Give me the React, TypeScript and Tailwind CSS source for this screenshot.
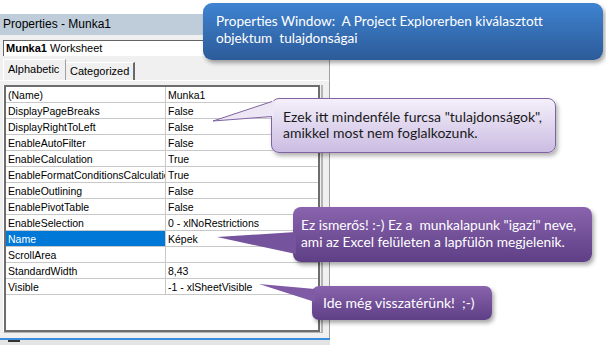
const rows: [string, string][] = [
  ['(Name)', 'Munka1'],
  ['DisplayPageBreaks', 'False'],
  ['DisplayRightToLeft', 'False'],
  ['EnableAutoFilter', 'False'],
  ['EnableCalculation', 'True'],
  ['EnableFormatConditionsCalculation', 'True'],
  ['EnableOutlining', 'False'],
  ['EnablePivotTable', 'False'],
  ['EnableSelection', '0 - xlNoRestrictions'],
  ['Name', 'Képek'],
  ['ScrollArea', ''],
  ['StandardWidth', '8,43'],
  ['Visible', '-1 - xlSheetVisible'],
];

const sans = "font-['Liberation_Sans',Arial,sans-serif]";
const callout = "font-['Lato','Open_Sans',sans-serif]";

export default function App() {
  return (
    <div className={`relative w-[606px] h-[345px] bg-white overflow-hidden ${sans}`}>
      {/* Properties window */}
      <div className="w-[330px] pt-[14px] flex flex-col">
        <div className="h-[21px] bg-[#bfcddb] border-r border-[#a0a0a0] pl-[3px] text-[12px] leading-[21px] text-black">
          Properties - Munka1
        </div>
        <div className="bg-[#f0f0f0] border-r border-[#a0a0a0] h-[303px] flex flex-col">
          <div className="mt-[5px] ml-[3px] w-[320px] h-[16px] bg-white border-t border-l border-[#646464] text-[11px] leading-[15px] pl-[2px] text-black">
            <span className="font-bold">Munka1</span> Worksheet
          </div>
          <div className="mt-[3px] h-[22px] flex items-end pl-[3px] border-b border-white">
            <div className="h-[21px] w-[63px] border-t border-l border-white border-r border-r-[#a0a0a0] text-[11px] leading-[19px] pl-[4px] bg-[#f0f0f0]">
              Alphabetic
            </div>
            <div className="h-[18px] w-[69px] border-t border-white border-r-2 border-r-[#696969] text-[11px] leading-[17px] pl-[4px]">
              Categorized
            </div>
          </div>
          <div className="mt-[4px] ml-[3px] w-[320px] border-r-2 border-b border-[#b4b4b4] border-l border-l-white">
            <div className="w-[316px] h-[247px] bg-white border-2 border-[#6d6d6d] text-[10.5px] text-black">
              {rows.map(([k, v]) => (
                <div key={k} className="flex h-[16px] border-b border-[#c8c8c8]">
                  <div
                    className={`w-[159px] pl-[2px] leading-[16px] overflow-hidden whitespace-nowrap ${
                      k === 'Name' ? 'bg-[#0078d7] text-white' : ''
                    }`}
                  >
                    {k}
                  </div>
                  <div className="flex-1 border-l border-[#c8c8c8] pl-[2px] leading-[16px] whitespace-nowrap overflow-hidden">
                    {v}
                  </div>
                </div>
              ))}
            </div>
          </div>
        </div>
        <div className="h-[2px] bg-[#3c8ce0]" />
        <div className="h-[5px] bg-[#e4e4e4] flex">
          <div className="ml-[8px] w-[12px] h-[2px] bg-[#333]" />
        </div>
      </div>

      {/* Blue callout */}
      <div
        className={`absolute left-[203px] top-[3px] w-[400px] h-[57px] rounded-[9px] bg-linear-to-b from-[#3f83d1] to-[#2c5b99] shadow-[2px_3px_4px_rgba(0,0,0,0.35)] pl-[13px] pt-[10px] text-[13.6px] leading-[17px] text-white ${callout}`}
      >
        <div>Properties Window:&nbsp; A Project Explorerben kiválasztott</div>
        <div>objektum&nbsp; tulajdonságai</div>
      </div>

      {/* Lavender callout */}
      <div
        className={`absolute left-[271px] top-[98px] w-[285px] h-[55px] rounded-[8px] border border-[#8064a2] bg-linear-to-b from-[#f4f0fa] to-[#cbbce2] shadow-[2px_3px_4px_rgba(0,0,0,0.3)] pl-[11px] pt-[10px] text-[14px] leading-[16px] text-[#1a1a1a] ${callout}`}
      >
        <div>Ezek itt mindenféle furcsa "tulajdonságok",</div>
        <div>amikkel most nem foglalkozunk.</div>
      </div>
      <svg className="absolute left-0 top-0" width="606" height="345">
        <polygon points="213,121 274,101 274,117" fill="#ece6f5" />
        <polyline points="272,101.5 213,121 272,116.5" fill="none" stroke="#8064a2" strokeWidth="1" />
      </svg>

      {/* Dark purple callout */}
      <div
        className={`absolute left-[293px] top-[207px] w-[299px] h-[55px] rounded-[8px] bg-linear-to-b from-[#8a64ae] to-[#5e3f85] shadow-[2px_3px_4px_rgba(0,0,0,0.35)] pl-[8px] pt-[9px] text-[13.75px] leading-[17px] text-white ${callout}`}
      >
        <div>Ez ismerős! :-) Ez a&nbsp; munkalapunk "igazi" neve,</div>
        <div>ami az Excel felületen a lapfülön megjelenik.</div>
      </div>
      <svg className="absolute left-0 top-0" width="606" height="345">
        <polygon points="217,237 296,232 296,254" fill="#76539d" />
      </svg>

      {/* Small purple callout */}
      <div
        className={`absolute left-[312px] top-[286px] w-[180px] h-[34px] rounded-[7px] bg-linear-to-b from-[#8a64ae] to-[#5e3f85] shadow-[2px_3px_4px_rgba(0,0,0,0.35)] pl-[11px] pt-[8px] text-[14px] leading-[17px] text-white ${callout}`}
      >
        Ide még visszatérünk!&nbsp; ;-)
      </div>
      <svg className="absolute left-0 top-0" width="606" height="345">
        <polygon points="259,284 315,289 315,302" fill="#7f5aa5" />
      </svg>
    </div>
  );
}
